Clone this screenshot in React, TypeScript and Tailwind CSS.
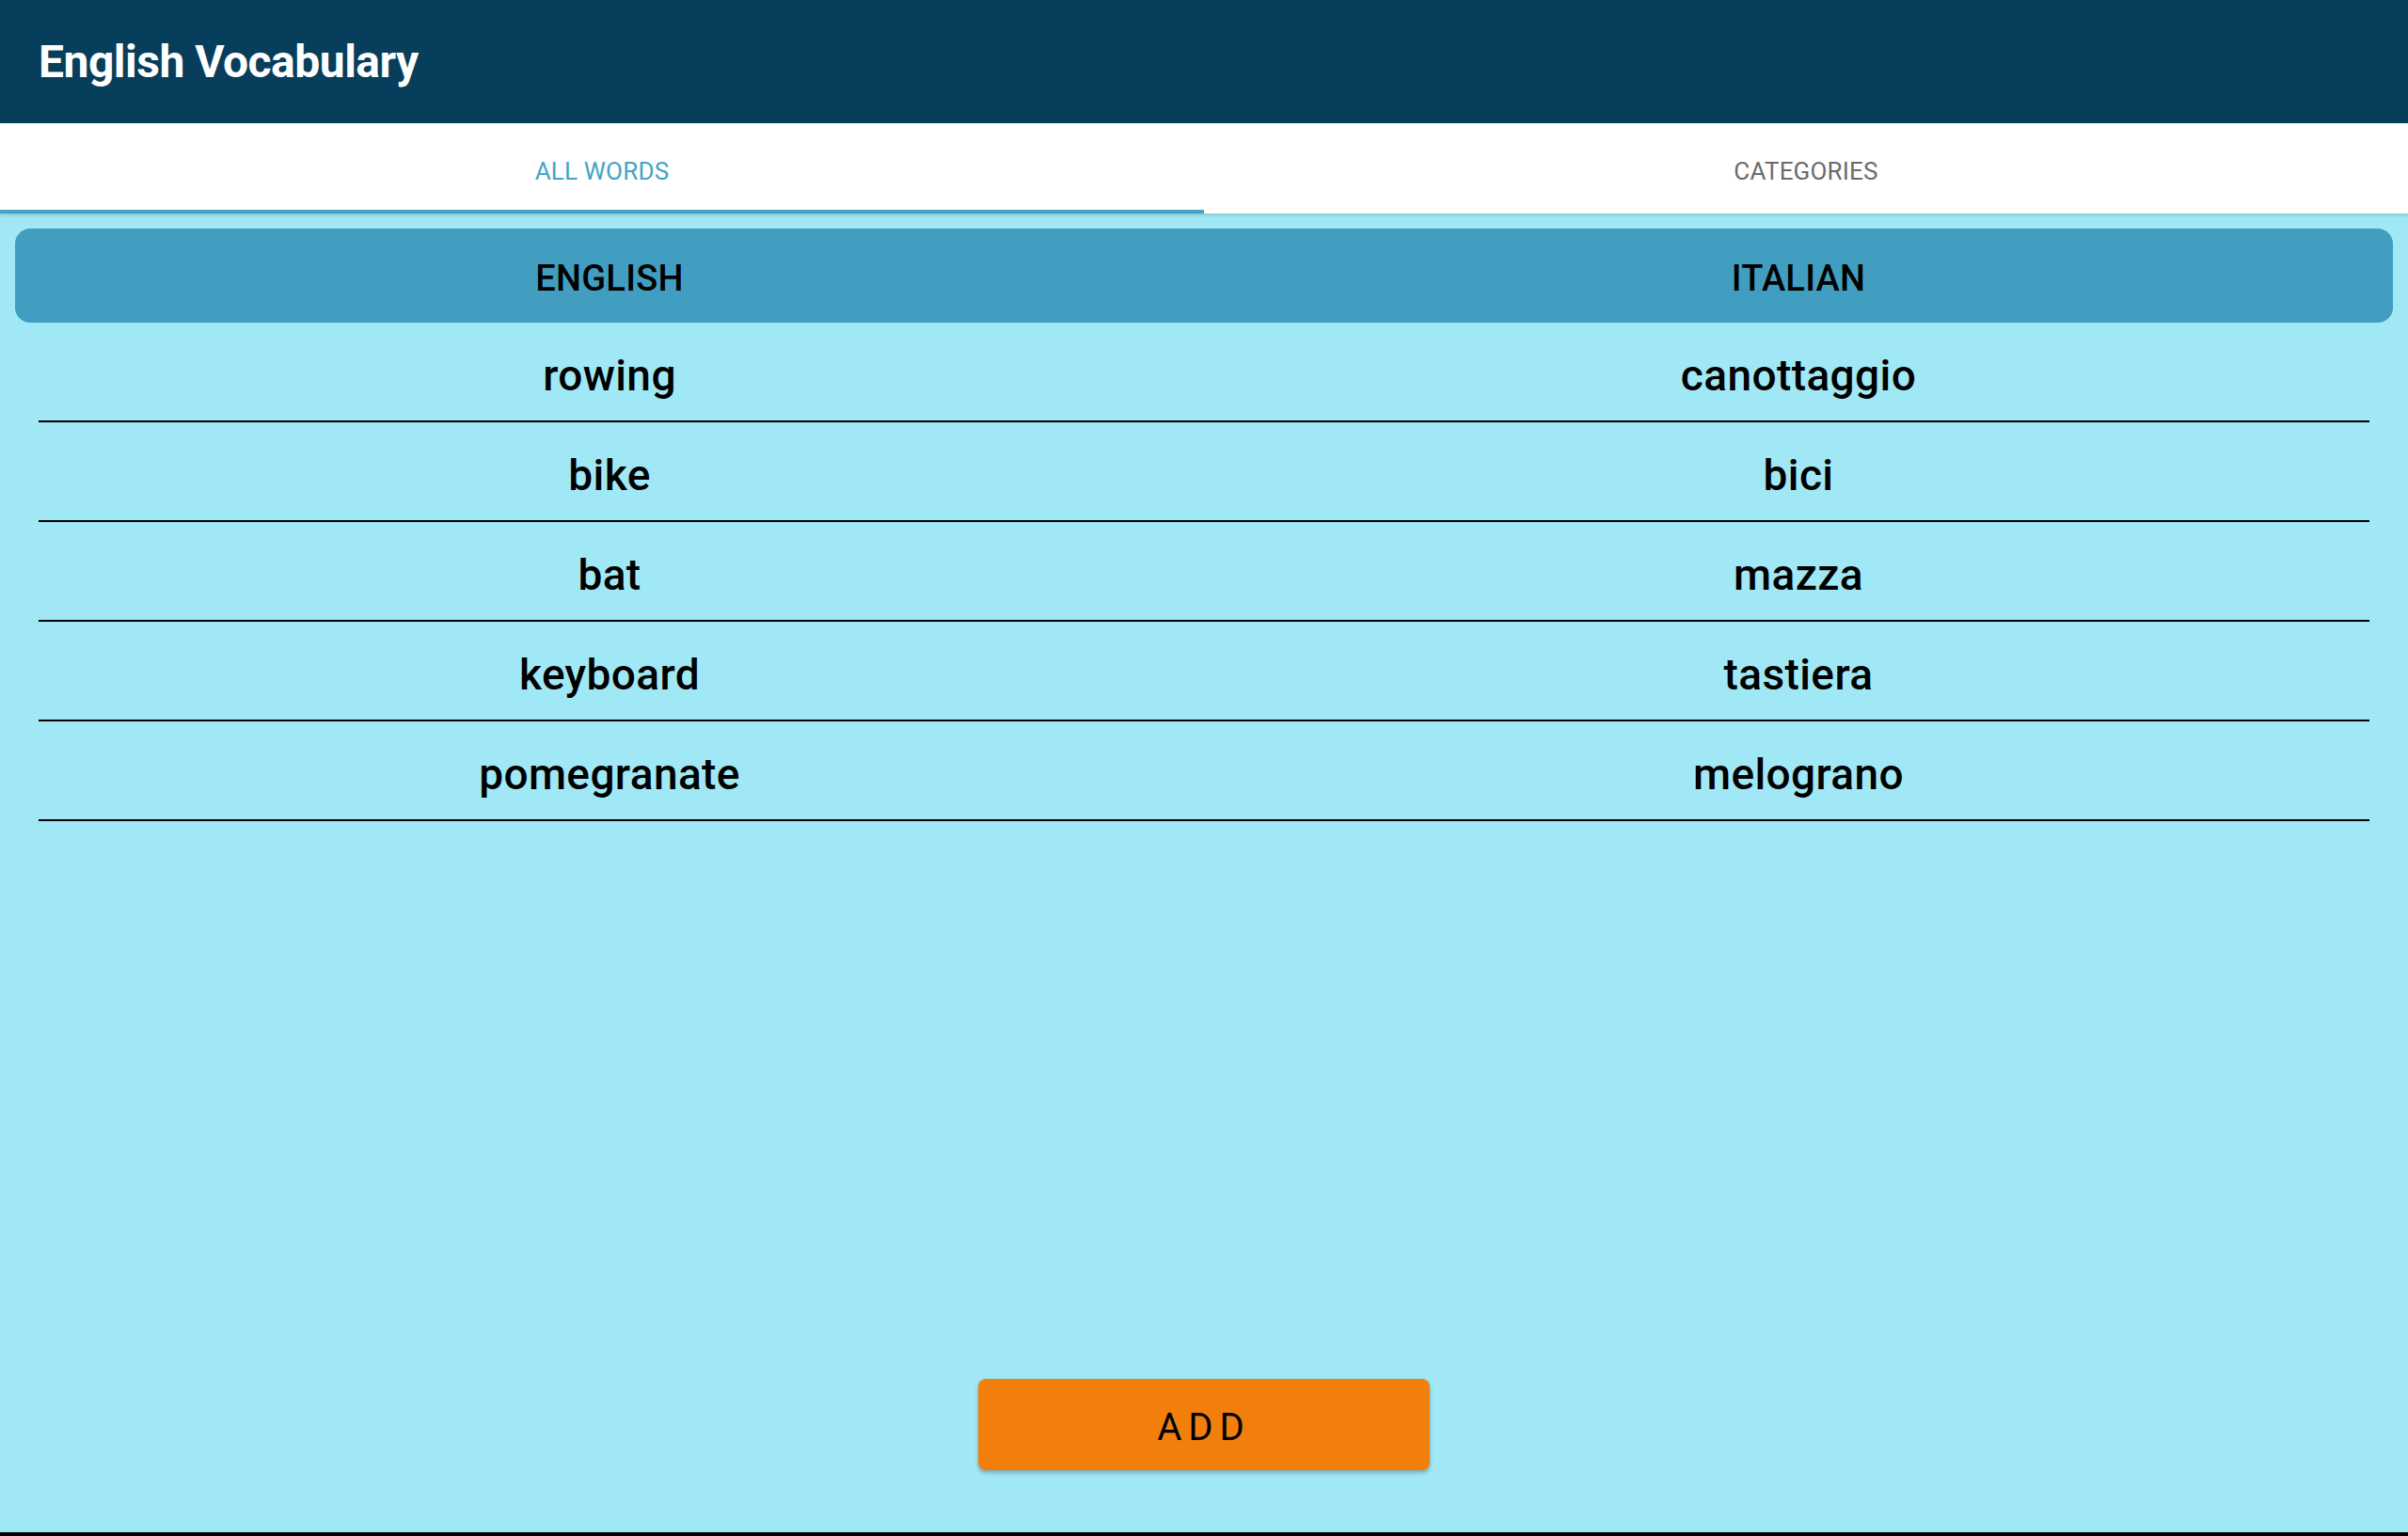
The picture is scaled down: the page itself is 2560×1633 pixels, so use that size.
const words = [
  { en: "rowing", it: "canottaggio" },
  { en: "bike", it: "bici" },
  { en: "bat", it: "mazza" },
  { en: "keyboard", it: "tastiera" },
  { en: "pomegranate", it: "melograno" },
];

export default function App() {
  return (
    <div className="flex h-screen flex-col bg-[#a0e8f5] font-['Roboto',sans-serif]">
      {/* app bar */}
      <div className="flex h-[131px] shrink-0 items-center bg-[#063e5b] px-[41px]">
        <h1 className="text-[48px] font-bold tracking-[-0.5px] text-white">English Vocabulary</h1>
      </div>

      {/* tabs */}
      <div className="flex h-[96px] shrink-0 bg-white shadow-[0_2px_3px_rgba(0,0,0,0.15)]">
        <div className="flex flex-1 flex-col">
          <div className="flex flex-1 items-center justify-center pt-[10px] text-[26px] tracking-[0.2px] text-[#45a3c6]">
            ALL WORDS
          </div>
          <div className="h-[4px] bg-[#45a3c6]" />
        </div>
        <div className="flex flex-1 flex-col">
          <div className="flex flex-1 items-center justify-center pt-[10px] text-[26px] tracking-[0.2px] text-[#6b6b6b]">
            CATEGORIES
          </div>
          <div className="h-[4px] bg-white" />
        </div>
      </div>

      {/* word list */}
      <div className="flex flex-1 flex-col px-[16px] pt-[16px]">
        <div className="grid h-[100px] grid-cols-2 items-center rounded-[16px] bg-[#419ec1] pt-[6px] text-[38px] font-medium tracking-[0.3px] text-black">
          <div className="text-center">ENGLISH</div>
          <div className="text-center">ITALIAN</div>
        </div>

        {words.map((w) => (
          <div key={w.en} className="flex h-[106px] flex-col">
            <div className="grid flex-1 grid-cols-2 items-center pt-[8px] text-[46px] font-medium tracking-[0.4px] text-black">
              <div className="text-center">{w.en}</div>
              <div className="text-center">{w.it}</div>
            </div>
            <div className="mx-[25px] h-[2px] bg-black" />
          </div>
        ))}

        <div className="flex flex-1 items-end justify-center pb-[66px]">
          <button className="flex h-[97px] w-[480px] items-center justify-center rounded-[8px] bg-[#f27f0c] pt-[6px] text-[40px] tracking-[7px] text-black shadow-[0_3px_4px_rgba(0,0,0,0.25)]">
            ADD
          </button>
        </div>
      </div>

      <div className="h-[4px] shrink-0 bg-black" />
    </div>
  );
}
